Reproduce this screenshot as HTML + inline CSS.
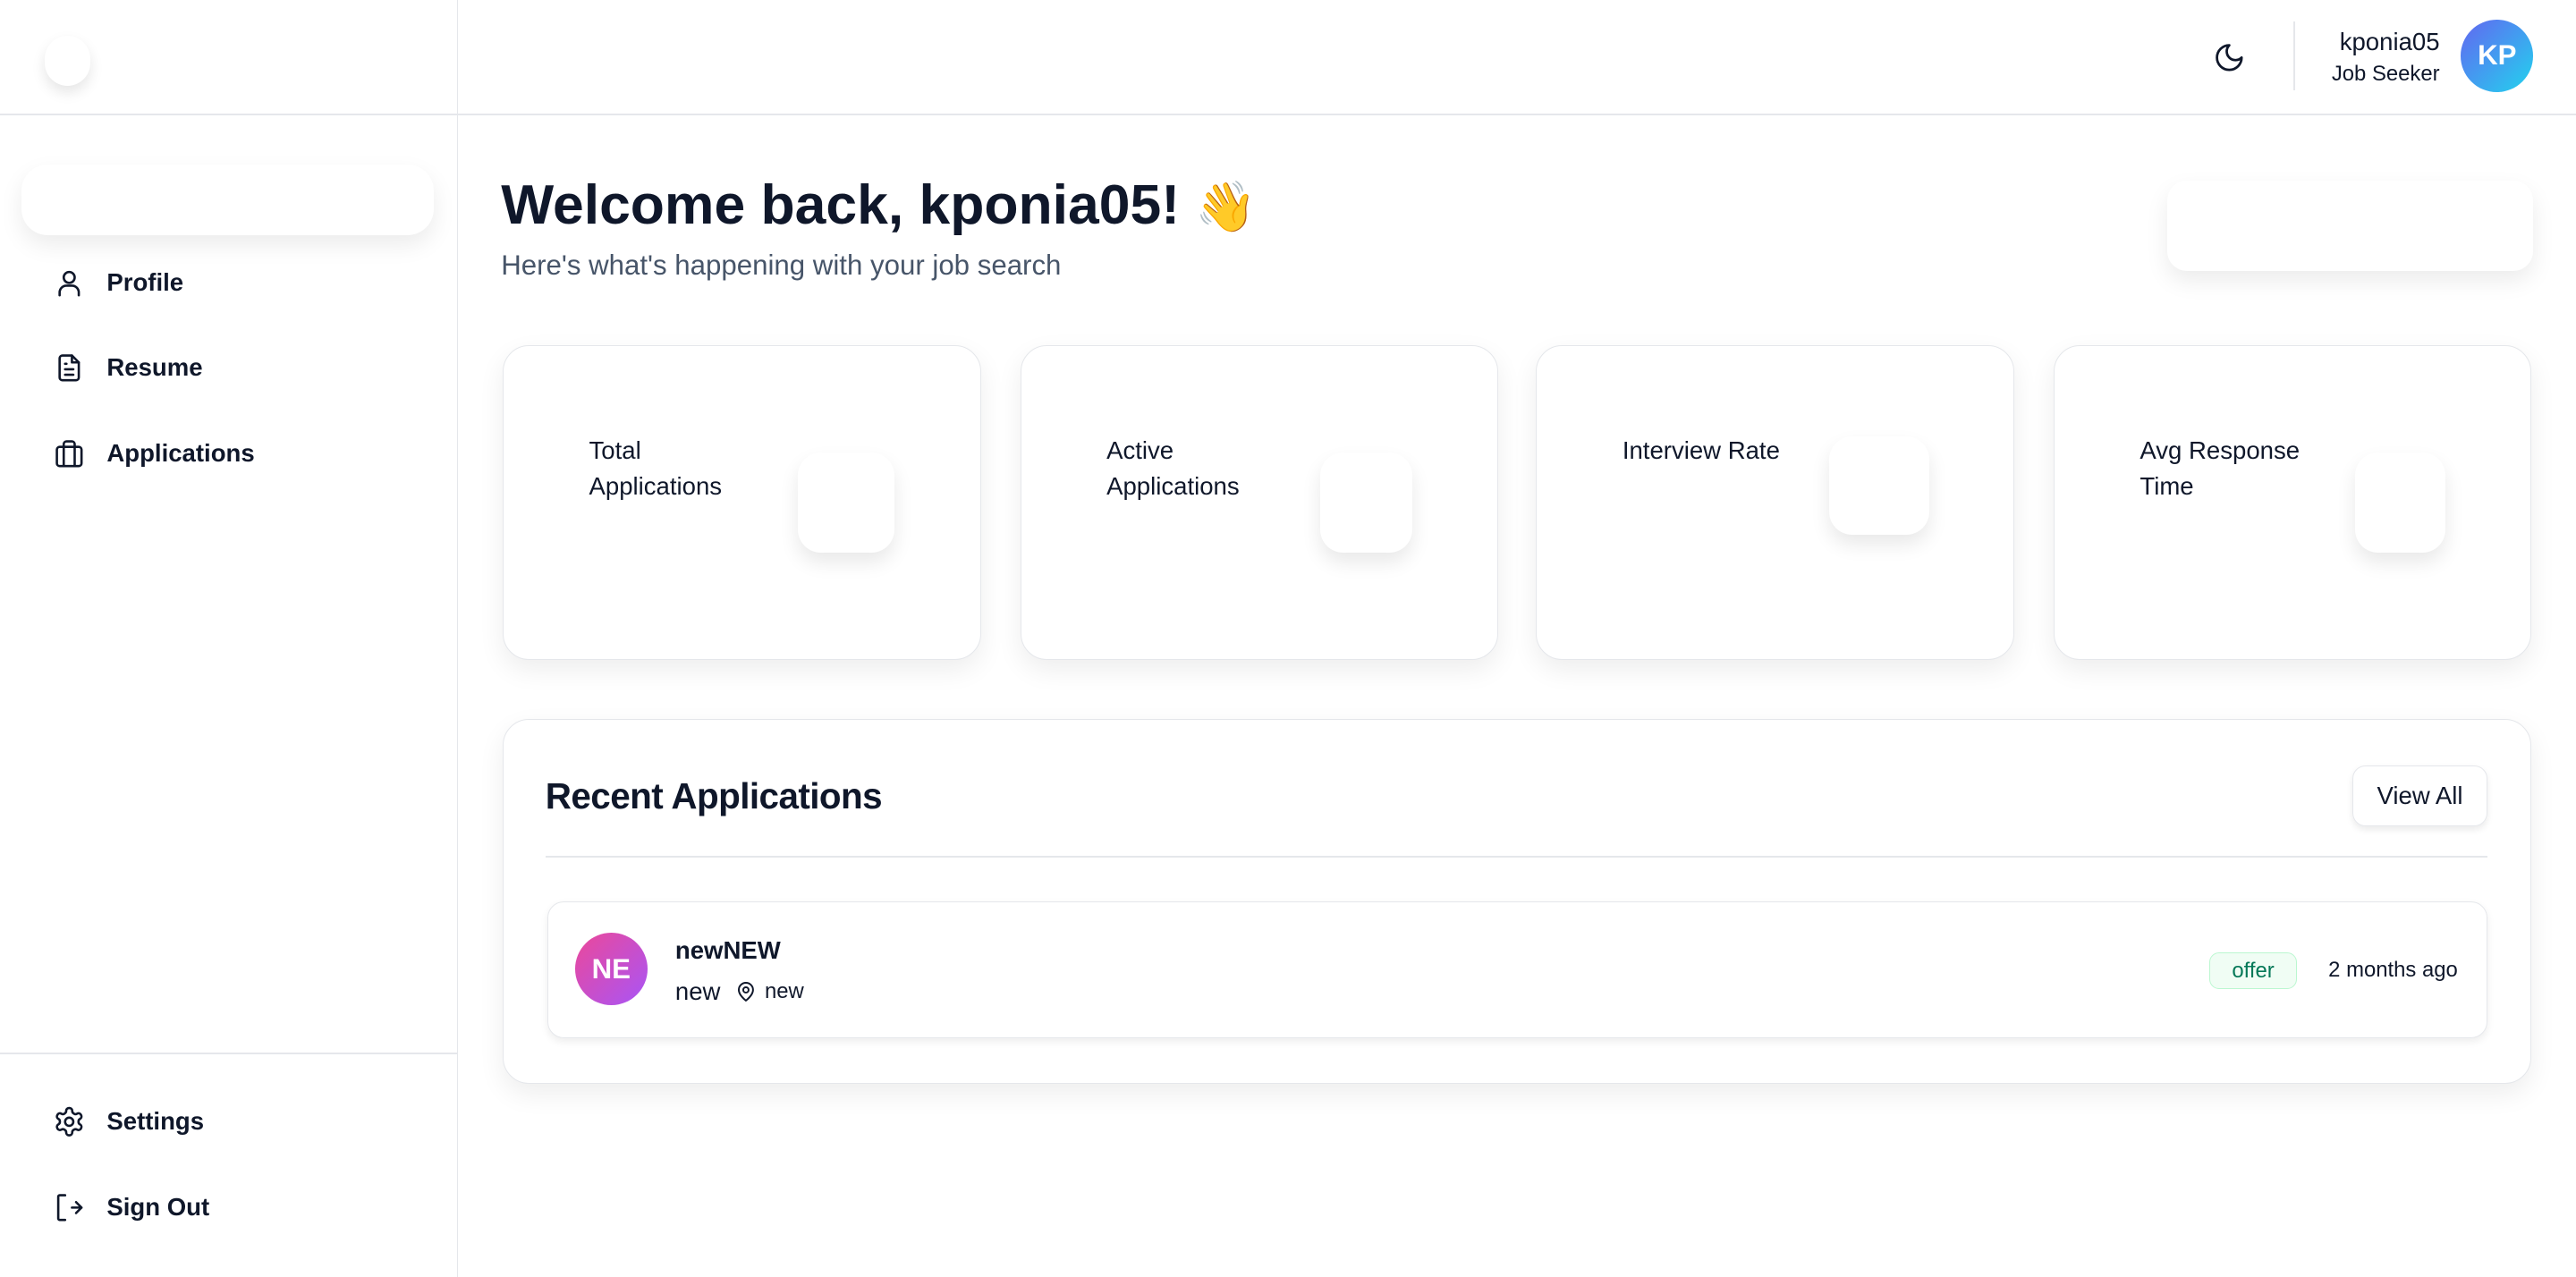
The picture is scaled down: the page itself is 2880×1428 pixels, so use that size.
<!DOCTYPE html>
<html><head><meta charset="utf-8"><style>
*{box-sizing:border-box;margin:0;padding:0}
html,body{width:2880px;height:1428px;overflow:hidden;background:#fff}
#r{zoom:1.83673;width:1568px;height:777.5px;position:relative;font-family:"Liberation Sans",sans-serif;color:#0f172a}
.a{position:absolute}
.nav{position:absolute;left:32px;display:flex;align-items:center;font-size:15px;font-weight:700;color:#0f172a}
.nav svg{width:20px;height:20px;margin-right:13px;fill:none;stroke:#0f172a;stroke-width:1.7;stroke-linecap:round;stroke-linejoin:round}
.card{position:absolute;top:210px;width:291px;height:192px;border:1px solid #e5e7eb;border-radius:16px;background:#fff;box-shadow:0 6px 16px rgba(0,0,0,.07)}
.card .l{position:absolute;left:52px;top:53px;font-size:15px;line-height:22px;font-weight:500;color:#0f172a}
.card .b{position:absolute;border-radius:14px;background:#fff;box-shadow:0 6px 12px rgba(0,0,0,.09)}
</style></head><body><div id="r">
<div class="a" style="left:278px;top:0;width:1px;height:778px;background:#e5e7eb"></div>
<div class="a" style="left:0;top:69px;width:1568px;height:1px;background:#e5e7eb"></div>
<div class="a" style="left:0;top:641px;width:278px;height:1px;background:#e5e7eb"></div>
<div class="a" style="left:27px;top:22px;width:28px;height:30px;border-radius:15px;background:#fff;box-shadow:0 4px 8px rgba(0,0,0,.1)"></div>
<div class="a" style="left:13px;top:100px;width:251px;height:43px;border-radius:16px;background:#fff;box-shadow:0 6px 14px rgba(0,0,0,.08)"></div>
<div class="nav" style="top:162px"><svg viewBox="0 0 24 24"><circle cx="12" cy="8" r="4"/><path d="M5 21v-2a5 5 0 0 1 5-5h4a5 5 0 0 1 5 5v2"/></svg>Profile</div>
<div class="nav" style="top:214px"><svg viewBox="0 0 24 24"><path d="M14 3H7a2 2 0 0 0-2 2v14a2 2 0 0 0 2 2h10a2 2 0 0 0 2-2V8z"/><path d="M14 3v5h5M9 13h6M9 17h6M9 9h1"/></svg>Resume</div>
<div class="nav" style="top:266px"><svg viewBox="0 0 24 24"><rect x="3" y="7" width="18" height="14" rx="2"/><path d="M8 21V5a2 2 0 0 1 2-2h4a2 2 0 0 1 2 2v16"/></svg>Applications</div>
<div class="nav" style="top:673px"><svg viewBox="0 0 24 24"><path d="M12.2 2h-.4a2 2 0 0 0-2 2v.2a2 2 0 0 1-1 1.7l-.4.3a2 2 0 0 1-2 0l-.2-.1a2 2 0 0 0-2.7.7l-.2.4a2 2 0 0 0 .7 2.7l.2.1a2 2 0 0 1 1 1.7v.5a2 2 0 0 1-1 1.7l-.2.1a2 2 0 0 0-.7 2.7l.2.4a2 2 0 0 0 2.7.7l.2-.1a2 2 0 0 1 2 0l.4.3a2 2 0 0 1 1 1.7v.2a2 2 0 0 0 2 2h.4a2 2 0 0 0 2-2v-.2a2 2 0 0 1 1-1.7l.4-.3a2 2 0 0 1 2 0l.2.1a2 2 0 0 0 2.7-.7l.2-.4a2 2 0 0 0-.7-2.7l-.2-.1a2 2 0 0 1-1-1.7v-.5a2 2 0 0 1 1-1.7l.2-.1a2 2 0 0 0 .7-2.7l-.2-.4a2 2 0 0 0-2.7-.7l-.2.1a2 2 0 0 1-2 0l-.4-.3a2 2 0 0 1-1-1.7V4a2 2 0 0 0-2-2z"/><circle cx="12" cy="12" r="3"/></svg>Settings</div>
<div class="nav" style="top:725px"><svg viewBox="0 0 24 24"><path d="M9 21H5a1 1 0 0 1-1-1V4a1 1 0 0 1 1-1h4M14 12h7M17 8l4 4-4 4"/></svg>Sign Out</div>
<svg class="a" style="left:1347px;top:25px" width="20" height="20" viewBox="0 0 24 24" fill="none" stroke="#0f172a" stroke-width="1.8" stroke-linecap="round" stroke-linejoin="round"><path d="M12 3a6 6 0 0 0 9 9 9 9 0 1 1-9-9z"/></svg>
<div class="a" style="left:1396px;top:13px;width:1px;height:42px;background:#e5e7eb"></div>
<div class="a" style="right:83px;top:16px;text-align:right;font-size:15px;font-weight:500;line-height:20px">kponia05<div style="font-size:13px;font-weight:400;line-height:18px">Job Seeker</div></div>
<div class="a" style="left:1498px;top:12px;width:44px;height:44px;border-radius:50%;background:linear-gradient(135deg,#6366f1,#22d3ee);color:#fff;font-weight:700;font-size:17px;display:flex;align-items:center;justify-content:center">KP</div>
<div class="a" style="left:305px;top:105px;font-size:34px;font-weight:700;color:#0f172a;white-space:nowrap">Welcome back, kponia05! <span style="font-family:'Noto Color Emoji',sans-serif;font-size:30px">👋</span></div>
<div class="a" style="left:305px;top:152px;font-size:17px;color:#475569">Here's what's happening with your job search</div>
<div class="a" style="left:1319px;top:110px;width:223px;height:55px;border-radius:12px;background:#fff;box-shadow:0 6px 14px rgba(0,0,0,.08)"></div>
<div class="card" style="left:306px"><div class="l">Total<br>Applications</div><div class="b" style="left:179px;top:65px;width:59px;height:61px"></div></div>
<div class="card" style="left:621px"><div class="l">Active<br>Applications</div><div class="b" style="left:182px;top:65px;width:56px;height:61px"></div></div>
<div class="card" style="left:935px"><div class="l">Interview Rate</div><div class="b" style="left:178px;top:55px;width:61px;height:60px"></div></div>
<div class="card" style="left:1250px"><div class="l">Avg Response<br>Time</div><div class="b" style="left:183px;top:65px;width:55px;height:61px"></div></div>
<div class="a" style="left:306px;top:438px;width:1235px;height:222px;border:1px solid #e5e7eb;border-radius:16px;background:#fff;box-shadow:0 6px 16px rgba(0,0,0,.07)"></div>
<div class="a" style="left:332px;top:472px;font-size:22px;font-weight:700;letter-spacing:-.3px">Recent Applications</div>
<div class="a" style="left:1432px;top:466px;width:82px;height:37px;border:1px solid #e5e7eb;border-radius:8px;box-shadow:0 2px 4px rgba(0,0,0,.08);font-size:15px;font-weight:500;display:flex;align-items:center;justify-content:center">View All</div>
<div class="a" style="left:332px;top:521px;width:1182px;height:1px;background:#e5e7eb"></div>
<div class="a" style="left:333px;top:549px;width:1181px;height:83px;border:1px solid #e5e7eb;border-radius:10px;box-shadow:0 2px 5px rgba(0,0,0,.07)"></div>
<div class="a" style="left:350px;top:568px;width:44px;height:44px;border-radius:50%;background:linear-gradient(135deg,#ec4899,#a855f7);color:#fff;font-weight:700;font-size:17px;display:flex;align-items:center;justify-content:center">NE</div>
<div class="a" style="left:411px;top:570px;font-size:15px;font-weight:700">newNEW</div>
<div class="a" style="left:411px;top:595px;font-size:15px;display:flex;align-items:center">new<svg style="margin:0 5px 0 9px" width="13" height="13" viewBox="0 0 24 24" fill="none" stroke="#0f172a" stroke-width="2"><path d="M20 10c0 6-8 12-8 12s-8-6-8-12a8 8 0 0 1 16 0z"/><circle cx="12" cy="10" r="3"/></svg><span style="font-size:13px">new</span></div>
<div class="a" style="left:1345px;top:580px;width:53px;height:22px;border:1px solid #bbf7d0;background:#f0fdf4;border-radius:6px;color:#047857;font-size:13px;display:flex;align-items:center;justify-content:center">offer</div>
<div class="a" style="right:72px;top:583px;font-size:13px">2 months ago</div>
</div></body></html>
